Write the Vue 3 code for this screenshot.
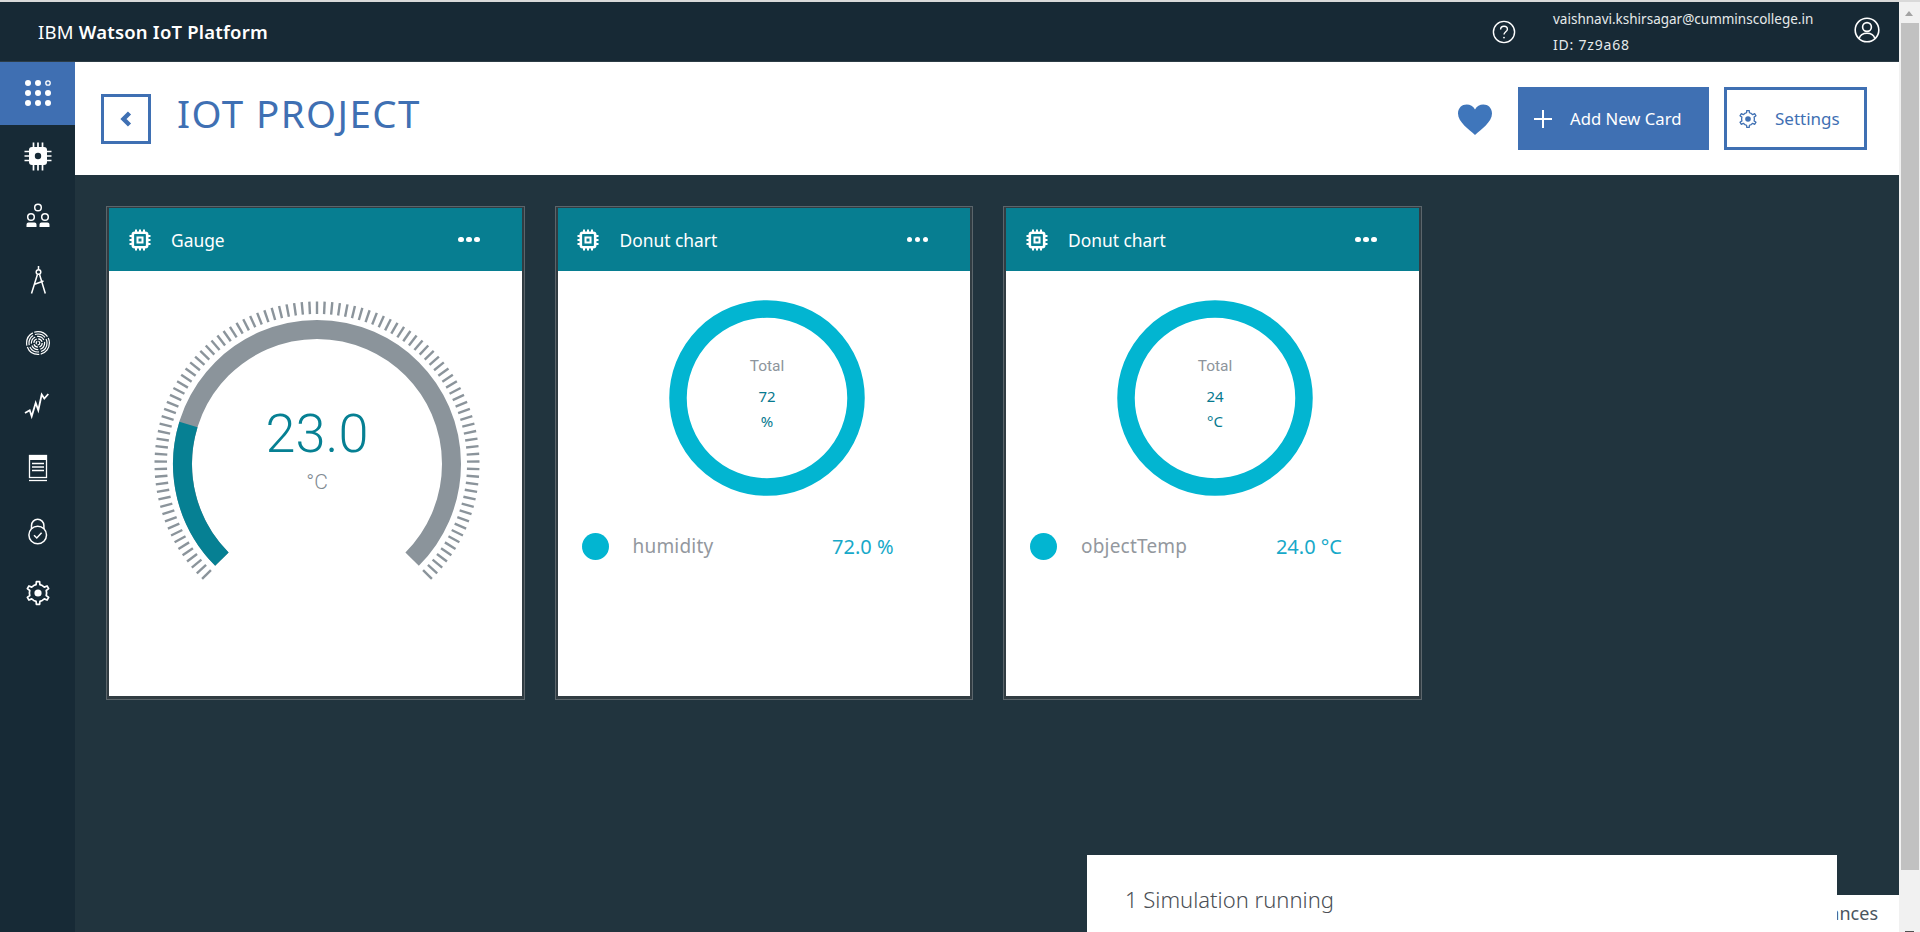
<script setup>
const cards = [
  { title: 'Donut chart', label: 'humidity', total: '72', unit: '%', value: '72.0 %' },
  { title: 'Donut chart', label: 'objectTemp', total: '24', unit: '°C', value: '24.0 °C' },
]

// ticks round the gauge, 270 degrees from lower left to lower right
const ticks = Array.from({ length: 101 }, (_, i) => {
  const a = ((135 + i * 2.7) * Math.PI) / 180
  return {
    x1: (170 + 150 * Math.cos(a)).toFixed(2),
    y1: (170 + 150 * Math.sin(a)).toFixed(2),
    x2: (170 + 162.5 * Math.cos(a)).toFixed(2),
    y2: (170 + 162.5 * Math.sin(a)).toFixed(2),
  }
})

function polar(deg, r) {
  const a = (deg * Math.PI) / 180
  return `${(170 + r * Math.cos(a)).toFixed(2)} ${(170 + r * Math.sin(a)).toFixed(2)}`
}
const trackArc = `M${polar(135, 134.5)} A134.5 134.5 0 1 1 ${polar(45, 134.5)}`
const valueArc = `M${polar(135, 134.5)} A134.5 134.5 0 0 1 ${polar(135 + 270 * 0.23, 134.5)}`

// gear outline with six teeth, centred on 0,0
function gear(R, r) {
  const pts = []
  for (let i = 0; i < 6; i++) {
    const c = i * 60 - 90
    for (const [d, rad] of [[-30, r], [-13, r], [-8, R], [8, R], [13, r]]) {
      const a = ((c + d) * Math.PI) / 180
      pts.push(`${(rad * Math.cos(a)).toFixed(2)} ${(rad * Math.sin(a)).toFixed(2)}`)
    }
  }
  return 'M' + pts.join('L') + 'Z'
}
const gearBig = gear(11.5, 8.6)
const gearSmall = gear(8.6, 6.4)
</script>

<template>
  <div class="screen">
    <div class="strip"></div>
    <div class="shell">
      <div class="page">
        <header class="topbar">
          <div class="brand"><span class="brand-ibm">IBM</span> Watson IoT Platform</div>
          <div class="top-right">
            <svg class="help" width="24" height="24" viewBox="0 0 24 24" fill="none" stroke="#fff" stroke-width="1.4">
              <circle cx="12" cy="12" r="10.6" />
              <path d="M8.6 9.4c0-2 1.5-3.2 3.4-3.2s3.4 1.2 3.4 3c0 2.6-3.4 2.6-3.4 5.4" />
              <circle cx="12" cy="17.6" r=".9" fill="#fff" stroke="none" />
            </svg>
            <div class="account">
              <div>vaishnavi.kshirsagar@cumminscollege.in</div>
              <div class="account-id">ID: 7z9a68</div>
            </div>
            <svg class="user" width="26" height="26" viewBox="0 0 26 26" fill="none" stroke="#fff" stroke-width="1.6">
              <circle cx="13" cy="13" r="11.8" />
              <circle cx="13" cy="10" r="4.4" />
              <path d="M5.2 21.4c1-3.6 3.8-5.2 7.8-5.2s6.800 1.600 7.800 5.200" />
            </svg>
          </div>
        </header>

        <div class="body">
          <nav class="sidebar">
            <a class="nav-item active">
              <svg width="30" height="30" viewBox="0 0 30 30" fill="#fff">
                <circle cx="5" cy="5" r="3" /><circle cx="15" cy="5" r="3" />
                <circle cx="25" cy="5" r="2.2" fill="none" stroke="#fff" stroke-width="1.3" />
                <circle cx="5" cy="15" r="3" /><circle cx="15" cy="15" r="3" /><circle cx="25" cy="15" r="3" />
                <circle cx="5" cy="25" r="3" /><circle cx="15" cy="25" r="3" /><circle cx="25" cy="25" r="3" />
              </svg>
            </a>
            <a class="nav-item">
              <svg width="30" height="30" viewBox="0 0 30 30">
                <path d="M10.500 1.500v28M15 1.500v28M19.500 1.500v28M1.500 10.500h27M1.500 15h27M1.500 19.500h27" stroke="#fff" stroke-width="1.700" fill="none" />
                <rect x="6" y="6" width="18" height="18" rx="3" fill="#fff" />
                <circle cx="15" cy="15" r="3.200" fill="#172a36" />
              </svg>
            </a>
            <a class="nav-item">
              <svg width="30" height="30" viewBox="0 0 30 30" fill="none" stroke="#fff" stroke-width="1.500">
                <circle cx="15" cy="4.500" r="3.300" />
                <circle cx="8" cy="14" r="3.300" />
                <circle cx="22" cy="14" r="3.300" />
                <path d="M3.500 24v-2.500a2 2 0 0 1 2-2h6a2 2 0 0 1 2 2V24zM16.500 24v-2.500a2 2 0 0 1 2-2h6a2 2 0 0 1 2 2V24z" fill="#fff" stroke="none" />
              </svg>
            </a>
            <a class="nav-item">
              <svg width="30" height="30" viewBox="0 0 30 30" fill="none" stroke="#fff" stroke-width="1.500">
                <circle cx="15.500" cy="6" r="2.300" />
                <path d="M15.500 0v3.500M14.500 8.200 8.500 27.500M16.500 8.200l5.800 19.300M11 18.500l9.500-3.500" />
              </svg>
            </a>
            <a class="nav-item">
              <svg width="30" height="30" viewBox="0 0 30 30" fill="none" stroke="#fff" stroke-width="1.200">
                <circle cx="15" cy="15" r="11.400" stroke-dasharray="15 1.500" />
                <circle cx="15" cy="15" r="9" stroke-dasharray="11 2" />
                <circle cx="15" cy="15" r="6.600" stroke-dasharray="8 2" />
                <circle cx="15" cy="15" r="4.200" stroke-dasharray="5 1.500" />
                <circle cx="15" cy="15" r="1.800" stroke-dasharray="3 1" />
              </svg>
            </a>
            <a class="nav-item">
              <svg width="30" height="30" viewBox="0 0 30 30" fill="none" stroke="#fff" stroke-width="1.800">
                <path d="M2 22 6.700 19.300 8.700 25.300 12.700 12 15.300 19.300 18.700 3.500 21.300 7.500 25.300 3" />
              </svg>
            </a>
            <a class="nav-item">
              <svg width="30" height="30" viewBox="0 0 30 30" fill="none" stroke="#fff">
                <rect x="6.500" y="2.500" width="17" height="22" stroke-width="1.300" />
                <rect x="6" y="2" width="18" height="5" fill="#fff" stroke="none" />
                <path d="M9 10.500h12M9 14h12M9 17.500h12" stroke-width="1.300" />
                <path d="M6 27.500h18" stroke-width="1.300" />
              </svg>
            </a>
            <a class="nav-item">
              <svg width="30" height="30" viewBox="0 0 30 30" fill="none" stroke="#fff" stroke-width="1.500">
                <circle cx="14.700" cy="19" r="8.800" />
                <path d="M8.500 13V9.500a6.200 6.200 0 0 1 12.400 0V13" />
                <path d="M11 19.300l2.800 2.700 4.800-5.200" />
              </svg>
            </a>
            <a class="nav-item">
              <svg width="30" height="30" viewBox="-15 -15 30 30">
                <path :d="gearBig" fill="none" stroke="#fff" stroke-width="1.700" stroke-linejoin="round" />
                <circle r="3.600" fill="#fff" />
              </svg>
            </a>
          </nav>

          <main class="content">
            <div class="page-head">
              <button class="back">
                <svg width="14" height="18" viewBox="0 0 14 18" fill="none" stroke="#3f70b3" stroke-width="4.400">
                  <path d="M10.500 3 4.500 9l6 6" />
                </svg>
              </button>
              <h1 class="title">IOT PROJECT</h1>
              <div class="head-actions">
                <svg class="heart" width="36" height="31" viewBox="0 0 36 31" fill="#3f76bb">
                  <path d="M18 31C12 25.500 1 18 1 9.500 1 3.800 5 .5 9.700.5c3.500 0 6.500 1.800 8.300 5 1.800-3.200 4.800-5 8.300-5C31 .5 35 3.800 35 9.500 35 18 24 25.500 18 31z" />
                </svg>
                <button class="btn-add">
                  <svg width="18" height="18" viewBox="0 0 18 18" stroke="#fff" stroke-width="2">
                    <path d="M9 0v18M0 9h18" />
                  </svg>
                  Add New Card
                </button>
                <button class="btn-settings">
                  <svg width="18" height="18" viewBox="-9 -9 18 18">
                    <path :d="gearSmall" fill="none" stroke="#3f70b3" stroke-width="1.300" stroke-linejoin="round" />
                    <circle r="2.800" fill="#3f70b3" />
                  </svg>
                  Settings
                </button>
              </div>
            </div>

            <div class="cards">
              <section class="card">
                <div class="card-head">
                  <svg class="chip" width="24" height="24" viewBox="0 0 24 24" fill="none" stroke="#fff">
                    <rect x="4.800" y="4.800" width="14.400" height="14.400" rx="2" stroke-width="2.600" />
                    <rect x="9.500" y="9.500" width="5" height="5" stroke-width="2" />
                    <path d="M8 1.500v2.500M12 1.500v2.500M16 1.500v2.500M8 20v2.500M12 20v2.500M16 20v2.500M1.500 8h2.500M1.500 12h2.500M1.500 16h2.500M20 8h2.500M20 12h2.500M20 16h2.500" stroke-width="2" />
                  </svg>
                  <span class="card-title">Gauge</span>
                  <span class="dots"><i></i><i></i><i></i></span>
                </div>
                <div class="card-body">
                  <svg class="gauge" width="340" height="300" viewBox="0 0 340 300">
                    <line v-for="(t, i) in ticks" :key="i" :x1="t.x1" :y1="t.y1" :x2="t.x2" :y2="t.y2" stroke="#8b949b" stroke-width="2.400" />
                    <path :d="trackArc" fill="none" stroke="#8b949b" stroke-width="19" />
                    <path :d="valueArc" fill="none" stroke="#068093" stroke-width="19" />
                    <text class="gauge-value" x="170" y="158" text-anchor="middle">23.0</text>
                    <text class="gauge-unit" x="170" y="195" text-anchor="middle">°C</text>
                  </svg>
                </div>
              </section>

              <section v-for="c in cards" :key="c.label" class="card">
                <div class="card-head">
                  <svg class="chip" width="24" height="24" viewBox="0 0 24 24" fill="none" stroke="#fff">
                    <rect x="4.800" y="4.800" width="14.400" height="14.400" rx="2" stroke-width="2.600" />
                    <rect x="9.500" y="9.500" width="5" height="5" stroke-width="2" />
                    <path d="M8 1.500v2.500M12 1.500v2.500M16 1.500v2.500M8 20v2.500M12 20v2.500M16 20v2.500M1.500 8h2.500M1.500 12h2.500M1.500 16h2.500M20 8h2.500M20 12h2.500M20 16h2.500" stroke-width="2" />
                  </svg>
                  <span class="card-title">{{ c.title }}</span>
                  <span class="dots"><i></i><i></i><i></i></span>
                </div>
                <div class="card-body">
                  <svg class="donut" width="200" height="200" viewBox="0 0 200 200">
                    <circle cx="100" cy="100" r="89" fill="none" stroke="#02b5d1" stroke-width="17.500" />
                    <text class="donut-label" x="100" y="73" text-anchor="middle">Total</text>
                    <text class="donut-num" x="100" y="104" text-anchor="middle">{{ c.total }}</text>
                    <text class="donut-num" x="100" y="129" text-anchor="middle">{{ c.unit }}</text>
                  </svg>
                  <div class="legend">
                    <span class="legend-dot"></span>
                    <span class="legend-label">{{ c.label }}</span>
                    <span class="legend-value">{{ c.value }}</span>
                  </div>
                </div>
              </section>
            </div>
          </main>
        </div>

        <div class="tab">Instances</div>
        <div class="sim">1 Simulation running</div>
      </div>

      <div class="scrollbar">
        <span class="arrow"></span>
        <span class="thumb"></span>
        <span class="arrow-bottom"></span>
      </div>
    </div>
  </div>
</template>

<style>
html, body { margin: 0; overflow: hidden; }
</style>

<style scoped>
.screen {
  width: 1920px;
  height: 932px;
  display: flex;
  flex-direction: column;
  overflow: hidden;
  font-family: "Noto Sans", sans-serif;
}
.strip { height: 2px; background: #d9d9d9; flex: none; }
.shell { flex: 1; display: flex; min-height: 0; }
.page { flex: 1; position: relative; display: flex; flex-direction: column; min-width: 0; background: #21343e; overflow: hidden; }

.topbar {
  height: 59px;
  flex: none;
  display: flex;
  align-items: center;
  justify-content: space-between;
  background: #172935;
  border-bottom: 1px solid #2c3c46;
  box-sizing: content-box;
  color: #fff;
}
.brand { margin-left: 38px; font-size: 18.500px; font-weight: 600; letter-spacing: .2px; }
.brand-ibm { font-weight: 400; }
.top-right { display: flex; align-items: center; margin-right: 19px; }
.help { margin-right: 37px; }
.account { width: 276px; font-size: 13.500px; line-height: 26px; color: #e6e9eb; margin-right: 25px; white-space: nowrap; }
.account-id { font-size: 14px; letter-spacing: .8px; }
.user { margin-top: -3px; }

.body { flex: 1; display: flex; min-height: 0; }
.sidebar { width: 75px; flex: none; background: #172a36; display: flex; flex-direction: column; }
.nav-item { height: 62.500px; display: flex; align-items: center; justify-content: center; flex: none; }
.nav-item.active { background: #3f6fb2; }

.content { flex: 1; min-width: 0; }
.page-head {
  height: 113px;
  background: #fff;
  display: flex;
  align-items: center;
  padding: 0 32px 0 26px;
}
.back {
  width: 50px;
  height: 50px;
  padding: 0;
  border: 3px solid #3f70b3;
  background: #fff;
  display: flex;
  align-items: center;
  justify-content: center;
}
.title {
  margin: -11px 0 0 26px;
  font-size: 38.500px;
  font-weight: 400;
  letter-spacing: 1.400px;
  color: #3f70b3;
  white-space: nowrap;
}
.head-actions { margin-left: auto; display: flex; align-items: center; }
.heart { margin: 2px 25px 0 0; }
.btn-add, .btn-settings {
  height: 63px;
  font-family: inherit;
  display: flex;
  align-items: center;
  padding: 0;
}
.btn-add { width: 191px; background: #3f70b3; border: 0; color: #fff; padding-left: 16px; gap: 18px; font-size: 16.700px; }
.btn-settings { width: 143px; margin-left: 15px; background: #fff; border: 3px solid #3f70b3; color: #3f70b3; padding-left: 12px; gap: 18px; font-size: 17px; }

.cards { display: flex; gap: 30px; padding: 31px 0 0 31px; }
.card {
  width: 418.500px;
  height: 494px;
  box-sizing: border-box;
  border: 1px solid #5b656b;
  padding: 1px 2px 3px;
  background: #313c42;
  display: flex;
  flex-direction: column;
}
.card-head {
  height: 63px;
  flex: none;
  background: #077e91;
  display: flex;
  align-items: center;
  color: #fff;
  padding-left: 18.500px;
}
.card-title { margin-left: 19.500px; font-size: 17.400px; }
.dots { margin-left: auto; margin-right: 42px; display: flex; gap: 2.500px; }
.dots i { width: 5.500px; height: 5.500px; border-radius: 50%; background: #fff; }
.card-body { flex: 1; background: #fff; }

.gauge { display: block; margin: 23px 0 0 38px; }
.gauge-value { font-family: Roboto, sans-serif; font-weight: 300; font-size: 54px; fill: #068093; }
.gauge-unit { font-family: Roboto, sans-serif; font-weight: 300; font-size: 21px; fill: #7f8a92; }

.donut { display: block; margin: 27px 0 0 109px; }
.donut-label { font-family: Roboto, sans-serif; font-size: 15.500px; fill: #8d959c; }
.donut-num { font-family: "Noto Sans", sans-serif; font-size: 15px; fill: #06798f; }

.legend { display: flex; align-items: center; height: 28px; margin-top: 34px; padding-left: 24px; width: 336px; box-sizing: border-box; }
.legend-dot { width: 27px; height: 27px; border-radius: 50%; background: #02b5d1; flex: none; }
.legend-label { margin-left: 24px; font-size: 19px; letter-spacing: .2px; color: #93989e; }
.legend-value { margin-left: auto; font-size: 20px; color: #17a9c9; }

.tab {
  position: absolute;
  left: 1500px;
  right: 0;
  bottom: 0;
  top: 893px;
  background: #fff;
  color: #4a5560;
  font-size: 18px;
  text-align: right;
  padding: 6px 21px 0 0;
}
.sim {
  position: absolute;
  left: 1087px;
  top: 853px;
  width: 750px;
  height: 90px;
  box-sizing: border-box;
  padding: 29px 0 0 38px;
  background: #fff;
  color: #4b4f55;
  font-size: 22px;
  font-weight: 300;
}

.scrollbar { width: 21px; flex: none; background: #f1f1f1; position: relative; }
.arrow {
  position: absolute;
  left: 6px;
  top: 9px;
  border-left: 4.500px solid transparent;
  border-right: 4.500px solid transparent;
  border-bottom: 5px solid #a3a3a3;
}
.thumb { position: absolute; left: 2px; right: 1px; top: 21px; height: 847px; background: #c1c1c1; }
.arrow-bottom { position: absolute; left: 6px; width: 9px; bottom: 0; height: 1px; background: #505050; }
</style>
